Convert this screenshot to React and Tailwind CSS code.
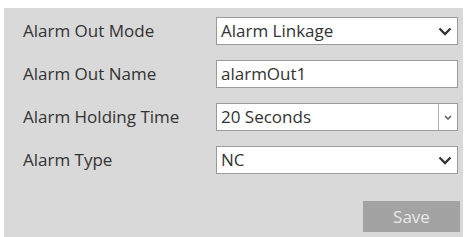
const Chevron = () => (
  <svg width="14" height="9" viewBox="0 0 14 9" className="shrink-0">
    <path d="M1.5 1.5 L7 7 L12.5 1.5" fill="none" stroke="#333" strokeWidth="2.3" />
  </svg>
);

const Select = ({ value }) => (
  <div className="flex h-[28px] items-center justify-between border border-[#9a9a9a] bg-white pl-[4px] pr-[5px] text-[#333]">
    <span>{value}</span>
    <Chevron />
  </div>
);

const SmallSelect = ({ value }) => (
  <div className="flex h-[28px] items-stretch border border-[#9a9a9a] bg-white text-[#333]">
    <span className="flex flex-1 items-center pl-[4px]">{value}</span>
    <span className="flex w-[19px] items-center justify-center border-l border-[#b0b0b0]">
      <svg width="8" height="5" viewBox="0 0 8 5">
        <path d="M1 1 L4 4 L7 1" fill="none" stroke="#555" strokeWidth="1.4" />
      </svg>
    </span>
  </div>
);

const Row = ({ label, children }) => (
  <div className="flex items-center">
    <div className="w-[193px] text-[#333]">{label}</div>
    <div className="w-[242px]">{children}</div>
  </div>
);

export default function App() {
  return (
    <div
      className="h-[237px] w-[473px] bg-white pl-[4px] pt-[8px] pr-[10px] text-[17px]"
      style={{ fontFamily: '"Open Sans", "Noto Sans", sans-serif' }}
    >
      <div className="flex h-full flex-col gap-[15px] bg-[#d9d9d9] pl-[19px] pt-[9px]">
        <Row label="Alarm Out Mode">
          <Select value="Alarm Linkage" />
        </Row>
        <Row label="Alarm Out Name">
          <div className="flex h-[28px] items-center border border-[#9a9a9a] bg-white pl-[4px] text-[#333]">
            alarmOut1
          </div>
        </Row>
        <Row label="Alarm Holding Time">
          <SmallSelect value="20 Seconds" />
        </Row>
        <Row label="Alarm Type">
          <Select value="NC" />
        </Row>
        <div className="flex justify-end pr-[3px] pt-[12px]">
          <button className="h-[31px] w-[97px] bg-[#a3a3a3] text-[#e8e8e8]">Save</button>
        </div>
      </div>
    </div>
  );
}
